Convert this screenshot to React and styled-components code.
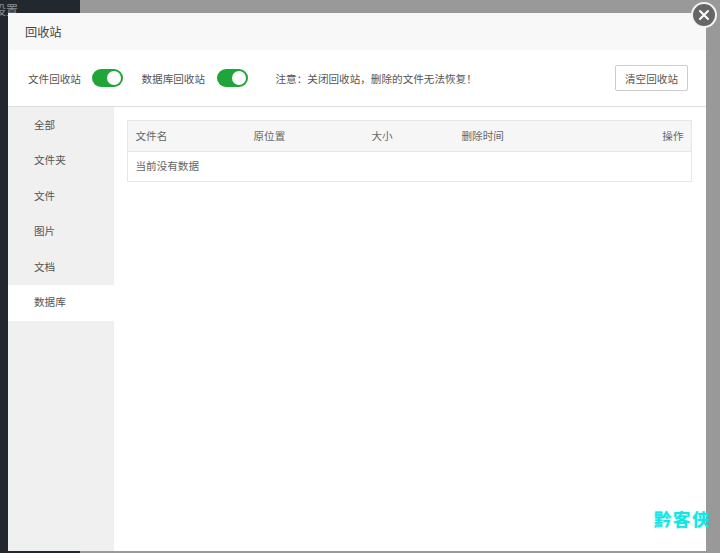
import React from "react";
import styled, { createGlobalStyle } from "styled-components";

const Global = createGlobalStyle`
  html, body { margin: 0; padding: 0; width: 720px; height: 553px; overflow: hidden; }
  body { font-family: "Liberation Sans", "Noto Sans CJK SC", sans-serif; font-size: 10.6px; color: #555; }
`;

const Backdrop = styled.div`
  position: relative; display: flex; width: 720px; height: 553px; background: #999; overflow: hidden;
`;
const SideNav = styled.div`
  width: 80px; height: 553px; background: #22282e; color: #8b8f92; font-size: 12px; line-height: 14px;
  box-sizing: border-box; padding: 4px 0 0 0; white-space: nowrap; overflow: hidden; text-indent: -6px;
`;
const Dialog = styled.section`
  position: absolute; left: 7.5px; top: 13px; width: 698.5px; height: 538px;
  display: flex; flex-direction: column; background: #fff;
`;
const Title = styled.header`
  height: 37px; padding-left: 17.5px; display: flex; align-items: center;
  background: #f8f8f8; font-size: 12.2px; color: #444;
`;
const Toolbar = styled.div`
  height: 56px; display: flex; align-items: center; padding: 0 18px 0 20.5px;
  border-bottom: 1px solid #ddd; font-size: 10.6px; color: #555;
`;
const SwitchLabel = styled.span`
  margin-right: ${p => p.$gap}px; white-space: nowrap;
`;
const Toggle = styled.span`
  position: relative; width: 31.5px; height: 18px; border-radius: 9px; background: #20a53a;
  margin-right: ${p => p.$gap}px; flex: none;
  &::after {
    content: ""; position: absolute; right: 2px; top: 2px; width: 14px; height: 14px;
    border-radius: 50%; background: #fff;
  }
`;
const Notice = styled.span`
  flex: 1; white-space: nowrap; color: #555;
`;
const ClearButton = styled.button`
  width: 73px; height: 26px; padding: 0; background: #fff; border: 1px solid #ccc; border-radius: 2px;
  font: inherit; color: #555;
`;
const Body = styled.div`
  flex: 1; display: flex; min-height: 0;
`;
const Menu = styled.nav`
  width: 106.5px; background: #f0f0f0; display: flex; flex-direction: column;
`;
const MenuItem = styled.div`
  height: ${p => (p.$active ? 36 : 35.5)}px; box-sizing: border-box;
  padding: 0 0 ${p => (p.$active ? 2 : 1)}px 26.5px; display: flex; align-items: center;
  font-size: 10.6px; color: #555; background: ${p => (p.$active ? "#fff" : "transparent")};
`;
const Content = styled.div`
  flex: 1; padding: 13px 14px 0 13.5px;
`;
const FileTable = styled.div`
  border: 1px solid #e6e6e6; width: 565px; box-sizing: border-box; font-size: 10.6px; color: #666;
`;
const HeadRow = styled.div`
  height: 31px; display: grid; grid-template-columns: 118px 118px 90px 1fr auto; align-items: center;
  padding: 0 7.5px 1px; background: #f6f6f6; border-bottom: 1px solid #e6e6e6; box-sizing: border-box;
`;
const EmptyRow = styled.div`
  height: 29px; box-sizing: border-box; display: flex; align-items: center; padding: 0 7.5px 2px; color: #666;
`;
const CloseButton = styled.div`
  position: absolute; left: 691px; top: 2px; width: 26px; height: 26px; box-sizing: border-box;
  border-radius: 50%; background: #666; border: 2px solid #f4f4f4; display: flex; align-items: center; justify-content: center;
`;
const Watermark = styled.div`
  position: absolute; left: 654px; top: 510px; font-size: 17.5px; font-weight: 700; letter-spacing: 1.6px;
  line-height: 20px; color: #14e4e4; white-space: nowrap; text-shadow: 0 0 2px rgba(20, 228, 228, 0.5);
`;

const heads = ["文件名", "原位置", "大小", "删除时间", "操作"];
const menu = ["全部", "文件夹", "文件", "图片", "文档", "数据库"];

export default function App() {
  return (
    <>
      <Global />
      <Backdrop>
        <SideNav>设置</SideNav>
        <Dialog>
          <Title>回收站</Title>
          <Toolbar>
            <SwitchLabel $gap={11}>文件回收站</SwitchLabel>
            <Toggle $gap={18} />
            <SwitchLabel $gap={11.6}>数据库回收站</SwitchLabel>
            <Toggle $gap={27.4} />
            <Notice>注意：关闭回收站，删除的文件无法恢复！</Notice>
            <ClearButton>清空回收站</ClearButton>
          </Toolbar>
          <Body>
            <Menu>
              {menu.map(m => (
                <MenuItem key={m} $active={m === "数据库"}>{m}</MenuItem>
              ))}
            </Menu>
            <Content>
              <FileTable>
                <HeadRow>
                  {heads.map(h => <span key={h}>{h}</span>)}
                </HeadRow>
                <EmptyRow>当前没有数据</EmptyRow>
              </FileTable>
            </Content>
          </Body>
        </Dialog>
        <CloseButton>
          <svg width="12" height="12" viewBox="0 0 12 12">
            <path d="M2 2 L10 10 M10 2 L2 10" stroke="#fff" strokeWidth="2" strokeLinecap="round" />
          </svg>
        </CloseButton>
        <Watermark>黔客侠</Watermark>
      </Backdrop>
    </>
  );
}
